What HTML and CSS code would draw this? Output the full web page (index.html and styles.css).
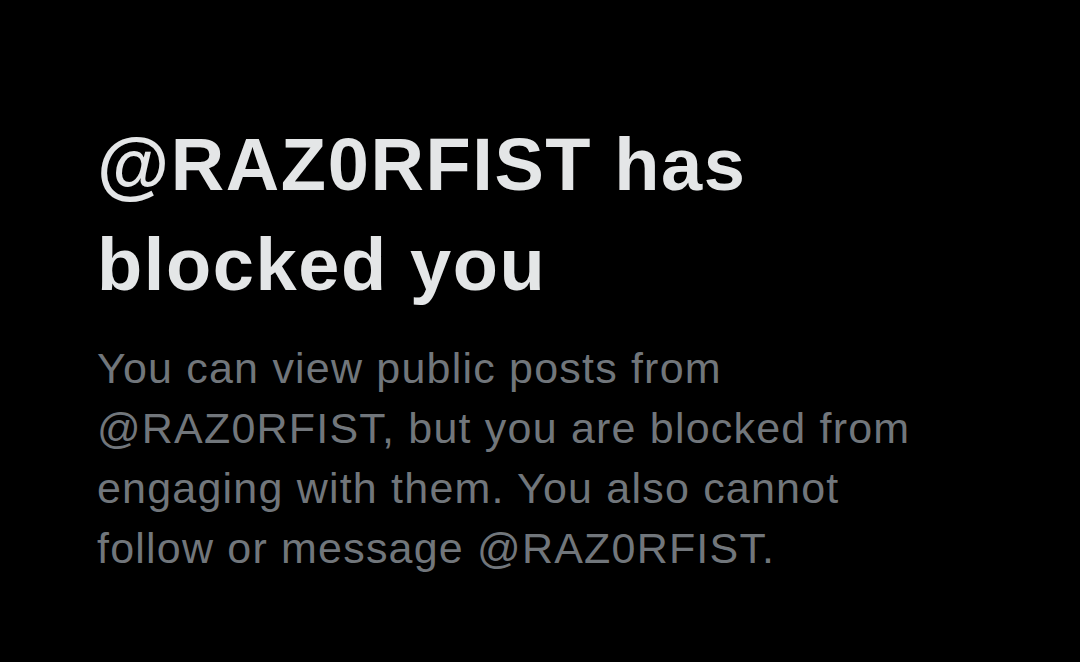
FILE: index.html
```html
<!DOCTYPE html>
<html lang="en">
<head>
  <meta charset="UTF-8">
  <meta name="viewport" content="width=device-width, initial-scale=1.0">
  <title>Blocked</title>
  <link rel="stylesheet" href="styles.css">
</head>
<body>
  <div class="blocked-container">
    <h1 class="blocked-title">@RAZ0RFIST has blocked you</h1>
    <p class="blocked-text">You can view public posts from @RAZ0RFIST, but you are blocked from engaging with them. You also cannot follow or message @RAZ0RFIST.</p>
  </div>
</body>
</html>
```

FILE: styles.css
```css
    body {
      margin: 0;
      padding: 0;
      font-family: "Liberation Sans", Arial, sans-serif;
      background: #000000;
      color: #e7e9ea;
      height: 100vh;
      overflow: hidden;
    }

    .blocked-container {
      padding: 115px 97px 0 97px;
      width: 845px;
    }

    .blocked-title {
      margin: 0;
      font-size: 74px;
      font-weight: bold;
      line-height: 100px;
      letter-spacing: 1.6px;
      color: #e4e6e7;
    }

    .blocked-text {
      margin: 23px 0 0 0;
      font-size: 43px;
      line-height: 60px;
      letter-spacing: 1.2px;
      color: #71767b;
    }
```
